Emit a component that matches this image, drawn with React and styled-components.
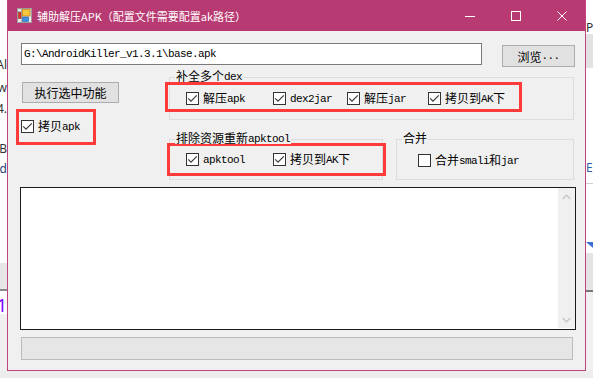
import React from "react";
import styled, { createGlobalStyle } from "styled-components";

const CJK = `"Noto Sans CJK SC", "Noto Sans", sans-serif`;
const MONO = `"Liberation Mono", "DejaVu Sans Mono", monospace`;

const GlobalStyle = createGlobalStyle`
  html, body { margin: 0; padding: 0; background: #ffffff; }
  body { width: 593px; height: 378px; overflow: hidden; font-family: ${CJK}; font-size: 12px; }
  * { box-sizing: border-box; }
`;

const Desktop = styled.div`
  width: 593px;
  height: 378px;
  display: grid;
  grid-template-columns: 7px 579px 7px;
  grid-template-rows: 371px 7px;
  overflow: hidden;
  background: #ffffff;
`;

const Strip = styled.div`
  display: flex;
  flex-direction: column;
  align-items: ${(p) => (p.$side === "left" ? "flex-end" : "flex-start")};
  overflow: hidden;
`;

const Frag = styled.div`
  flex: none;
  margin-top: ${(p) => p.$mt || 0}px;
  height: ${(p) => p.$size || 12}px;
  font-family: "Noto Sans", sans-serif;
  font-size: ${(p) => p.$size || 12}px;
  line-height: ${(p) => p.$size || 12}px;
  color: ${(p) => p.$color || "#333"};
  white-space: nowrap;
`;

const Band = styled.div`
  flex: none;
  align-self: stretch;
  margin-top: ${(p) => p.$mt || 0}px;
  height: ${(p) => p.$h}px;
  background: ${(p) => p.$bg};
`;

const Fill = styled.div`
  flex: 1;
  align-self: stretch;
  background: ${(p) => p.$bg};
`;

const BottomStrip = styled.div`
  grid-column: 1 / -1;
  background: #ededed;
`;

const Window = styled.div`
  display: flex;
  flex-direction: column;
  width: 579px;
  height: 371px;
  border: 1px solid #c2447f;
  border-top: none;
  background: #f0f0f0;
`;

const TitleBar = styled.div`
  flex: none;
  height: 31px;
  display: flex;
  align-items: center;
  background: #b83a72;
  color: #ffffff;
`;

const AppIcon = styled.svg`
  flex: none;
  margin-left: 9px;
  width: 15px;
  height: 15px;
`;

const Title = styled.div`
  margin-left: 5px;
  font-family: ${CJK};
  font-size: 11px;
  line-height: 16px;
  white-space: nowrap;
  flex: 1;
`;

const CaptionButton = styled.div`
  flex: none;
  width: 46px;
  height: 31px;
  display: flex;
  align-items: center;
  justify-content: center;
`;

const Client = styled.div`
  flex: 1;
  display: flex;
  flex-direction: column;
`;

const TopRow = styled.div`
  display: flex;
  align-items: flex-start;
  margin-top: 12px;
`;

const PathBox = styled.div`
  margin-left: 13px;
  width: 461px;
  height: 22px;
  border: 1px solid #7a7a7a;
  background: #ffffff;
  padding-left: 2px;
  display: flex;
  align-items: center;
  color: #000;
`;

const Button = styled.div`
  flex: none;
  margin-left: ${(p) => p.$ml || 0}px;
  margin-top: ${(p) => p.$mt || 0}px;
  width: ${(p) => p.$w}px;
  height: ${(p) => p.$h}px;
  border: 1px solid #adadad;
  background: #e1e1e1;
  display: flex;
  align-items: center;
  justify-content: center;
  color: #000;
  white-space: nowrap;
`;

const MiddleRow = styled.div`
  display: flex;
  margin-top: 4px;
`;

const LeftCol = styled.div`
  flex: none;
  width: 161px;
  display: flex;
  flex-direction: column;
  align-items: flex-start;
`;

const RightCol = styled.div`
  flex: none;
  width: 405px;
  display: flex;
  flex-direction: column;
`;

const GroupRow = styled.div`
  display: flex;
  margin-top: 19px;
`;

const Group = styled.div`
  position: relative;
  flex: none;
  margin-top: ${(p) => p.$mt || 0}px;
  margin-left: ${(p) => p.$ml || 0}px;
  width: ${(p) => p.$w}px;
  height: ${(p) => p.$h}px;
  border: 1px solid #dcdcdc;
  display: flex;
  flex-direction: column;
  align-items: flex-start;
`;

const GroupLabel = styled.div`
  position: absolute;
  top: -8px;
  left: 5px;
  padding: 0 1px;
  height: 12px;
  line-height: 12px;
  background: #f0f0f0;
  white-space: nowrap;
  color: #000;
`;

const Highlight = styled.div`
  flex: none;
  margin-left: ${(p) => p.$ml || 0}px;
  margin-top: ${(p) => p.$mt || 0}px;
  width: ${(p) => p.$w}px;
  height: ${(p) => p.$h}px;
  border: 3px solid #ff3a3a;
  display: flex;
  align-items: flex-start;
  padding-top: ${(p) => p.$pt || 0}px;
`;

const CheckItem = styled.div`
  flex: none;
  display: flex;
  align-items: center;
  margin-left: ${(p) => p.$ml || 0}px;
  margin-top: ${(p) => p.$mt || 0}px;
  height: 13px;
  color: #000;
  white-space: nowrap;
`;

const Box = styled.span`
  flex: none;
  width: 13px;
  height: 13px;
  border: 1px solid #333333;
  background: #ffffff;
  display: flex;
  align-items: center;
  justify-content: center;
`;

const CheckLabel = styled.span`
  margin-left: 4px;
  line-height: 13px;
`;

const Cjk = styled.span`
  font-family: ${CJK};
  font-size: 12px;
`;

const Latin = styled.span`
  font-family: ${MONO};
  font-size: 11px;
  letter-spacing: -0.6px;
  vertical-align: 1px;
`;

const TextArea = styled.div`
  margin-top: 7px;
  margin-left: 12px;
  width: 556px;
  height: 143px;
  border: 1px solid #1a1a1a;
  background: #ffffff;
  display: flex;
  justify-content: flex-end;
`;

const ScrollBar = styled.div`
  width: 17px;
  margin-bottom: 1px;
  background: #f0f0f0;
  display: flex;
  flex-direction: column;
  justify-content: space-between;
`;

const ScrollArrow = styled.div`
  height: 17px;
  display: flex;
  align-items: center;
  justify-content: center;
`;

const Progress = styled.div`
  margin-top: 7px;
  margin-left: 13px;
  width: 552px;
  height: 23px;
  border: 1px solid #bcbcbc;
  background: #e6e6e6;
`;

function Mixed({ text }) {
  const parts = text.split(/([\x20-\x7E]+)/).filter(Boolean);
  return parts.map((p, i) =>
    /^[\x20-\x7E]+$/.test(p) ? <Latin key={i}>{p}</Latin> : <Cjk key={i}>{p}</Cjk>
  );
}

function CheckBox({ checked, label, ml, mt }) {
  return (
    <CheckItem $ml={ml} $mt={mt}>
      <Box>
        {checked && (
          <svg width="11" height="11" viewBox="0 0 11 11">
            <path d="M1.2 5.3 L4 8.1 L9.8 2.3" fill="none" stroke="#3a3a3a" strokeWidth="1.2" />
          </svg>
        )}
      </Box>
      <CheckLabel>
        <Mixed text={label} />
      </CheckLabel>
    </CheckItem>
  );
}

export default function App() {
  return (
    <>
      <GlobalStyle />
      <Desktop>
        <Strip $side="left">
          <Frag $mt={59}>Al</Frag>
          <Frag $mt={11}>w</Frag>
          <Frag $mt={9}>4.</Frag>
          <Frag $mt={28}>B</Frag>
          <Frag $mt={8} $color="#1f3f7a">d</Frag>
          <Band $mt={88} $h={26} $bg="#e6e6e6" />
          <Band $h={2} $bg="#8a8a8a" />
          <Frag $mt={5} $size={18} $color="#7a00ff">1</Frag>
          <Fill $bg="#f0f0f0" />
        </Strip>

        <Window>
          <TitleBar>
            <AppIcon viewBox="0 0 15 15">
              <rect x="0.5" y="0.5" width="14" height="14" fill="#e9e9e9" stroke="#9c9c9c" />
              <line x1="4.5" y1="1" x2="4.5" y2="14" stroke="#b5b5b5" />
              <line x1="1" y1="3.5" x2="14" y2="3.5" stroke="#b5b5b5" />
              <rect x="1.5" y="4.5" width="2.5" height="6" fill="#d93a2b" stroke="#9e1f16" strokeWidth="0.6" />
              <rect x="5.5" y="1.5" width="7.5" height="6.5" fill="#f6c63d" stroke="#d08614" strokeWidth="0.8" />
              <rect x="5.5" y="9" width="6" height="4.5" fill="#3e8de0" stroke="#1f5fae" strokeWidth="0.6" />
            </AppIcon>
            <Title>辅助解压APK（配置文件需要配置ak路径）</Title>
            <CaptionButton>
              <svg width="10" height="10" viewBox="0 0 10 10">
                <line x1="0" y1="5.5" x2="10" y2="5.5" stroke="#fff" strokeWidth="1" />
              </svg>
            </CaptionButton>
            <CaptionButton>
              <svg width="10" height="10" viewBox="0 0 10 10">
                <rect x="0.5" y="0.5" width="9" height="9" fill="none" stroke="#fff" strokeWidth="1" />
              </svg>
            </CaptionButton>
            <CaptionButton>
              <svg width="10" height="10" viewBox="0 0 10 10">
                <path d="M0.5 0.5 L9.5 9.5 M9.5 0.5 L0.5 9.5" stroke="#fff" strokeWidth="1" />
              </svg>
            </CaptionButton>
          </TitleBar>

          <Client>
            <TopRow>
              <PathBox>
                <Latin>G:\AndroidKiller_v1.3.1\base.apk</Latin>
              </PathBox>
              <Button $ml={20} $mt={2} $w={73} $h={22}>
                <Mixed text="浏览..." />
              </Button>
            </TopRow>

            <MiddleRow>
              <LeftCol>
                <Button $ml={14} $mt={11} $w={97} $h={21}>
                  <Cjk>执行选中功能</Cjk>
                </Button>
                <Highlight $ml={8} $mt={6} $w={80} $h={36} $pt={8}>
                  <CheckBox checked label="拷贝apk" ml={2} />
                </Highlight>
              </LeftCol>

              <RightCol>
                <Group $mt={6} $w={405} $h={43}>
                  <GroupLabel>
                    <Mixed text="补全多个dex" />
                  </GroupLabel>
                  <Highlight $ml={-5} $mt={4} $w={357} $h={30} $pt={7}>
                    <CheckBox checked label="解压apk" ml={18} />
                    <CheckBox checked label="dex2jar" ml={28} />
                    <CheckBox checked label="解压jar" ml={15} />
                    <CheckBox checked label="拷贝到AK下" ml={22} />
                  </Highlight>
                </Group>

                <GroupRow>
                  <Group $w={214} $h={41}>
                    <GroupLabel>
                      <Mixed text="排除资源重新apktool" />
                    </GroupLabel>
                    <Highlight $ml={-3} $mt={3} $w={219} $h={33} $pt={7}>
                      <CheckBox checked label="apktool" ml={16} />
                      <CheckBox checked label="拷贝到AK下" ml={28} />
                    </Highlight>
                  </Group>
                  <Group $ml={13} $w={178} $h={41}>
                    <GroupLabel>
                      <Mixed text="合并" />
                    </GroupLabel>
                    <CheckBox label="合并smali和jar" ml={21} mt={14} />
                  </Group>
                </GroupRow>
              </RightCol>
            </MiddleRow>

            <TextArea>
              <ScrollBar>
                <ScrollArrow>
                  <svg width="9" height="6" viewBox="0 0 9 6">
                    <path d="M0.8 5 L4.5 1.2 L8.2 5" fill="none" stroke="#c2c2c2" strokeWidth="1.2" />
                  </svg>
                </ScrollArrow>
                <ScrollArrow>
                  <svg width="9" height="6" viewBox="0 0 9 6">
                    <path d="M0.8 1 L4.5 4.8 L8.2 1" fill="none" stroke="#c2c2c2" strokeWidth="1.2" />
                  </svg>
                </ScrollArrow>
              </ScrollBar>
            </TextArea>

            <Progress />
          </Client>
        </Window>

        <Strip $side="right">
          <Frag $mt={22}>P</Frag>
          <Band $h={34} $bg="#e2e2e2" />
          <Frag $mt={94} $color="#2e5fa6">E</Frag>
          <Band $mt={9} $h={1} $bg="#cfcfcf" />
          <svg width="7" height="6" viewBox="0 0 7 6" style={{ marginTop: 58, flex: "none" }}>
            <path d="M0 0 L7 0 L7 6 Z" fill="#3c6fd0" />
          </svg>
          <Band $mt={5} $h={37} $bg="#e3e3e3" />
          <Band $h={2} $bg="#777777" />
          <Fill $bg="#f0f0f0" />
        </Strip>

        <BottomStrip />
      </Desktop>
    </>
  );
}
